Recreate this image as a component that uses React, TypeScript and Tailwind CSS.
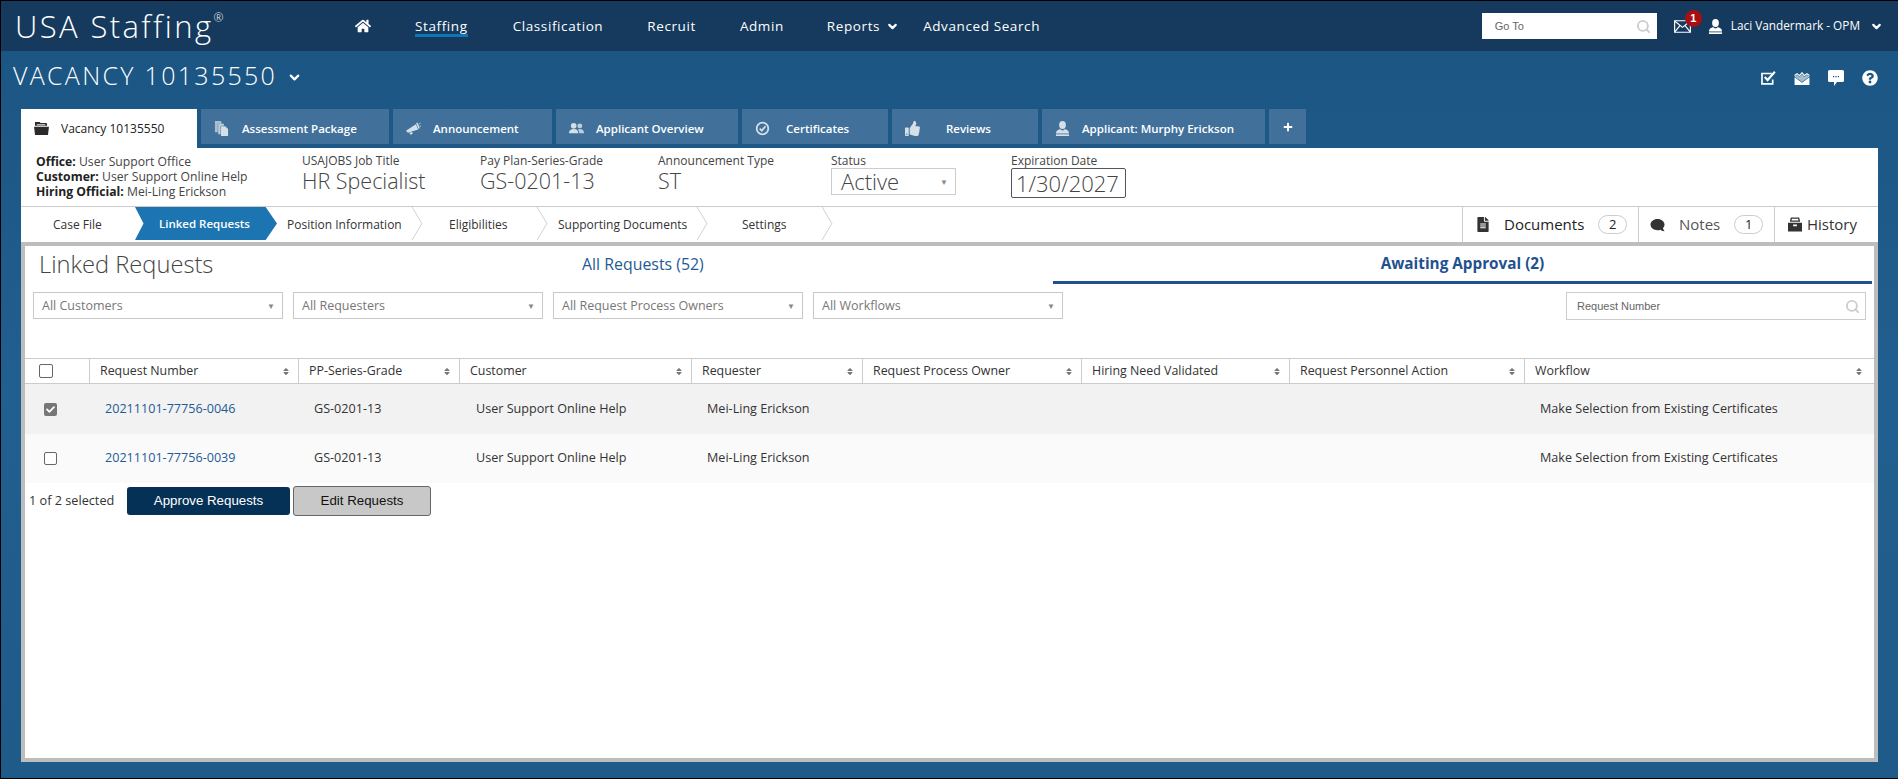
import { ChevronDown, Search } from 'lucide-react'
import { FaHome, FaThumbsUp, FaPlus, FaFileAlt, FaComment, FaQuestionCircle, FaCheck, FaSort } from 'react-icons/fa'

const FONT = "font-['Open_Sans','Noto_Sans',sans-serif]"

const NAV = [
  { label: 'Staffing', cls: 'ml-[44px] border-[#0f75b5]' },
  { label: 'Classification', cls: 'ml-[45px] border-transparent' },
  { label: 'Recruit', cls: 'ml-[44px] border-transparent' },
  { label: 'Admin', cls: 'ml-[44px] border-transparent' },
]

const TABS = [
  { label: 'Assessment Package', Icon: DocsIcon, w: 'w-[188px]', gap: 'gap-[13px]' },
  { label: 'Announcement', Icon: HornIcon, w: 'w-[159px]', gap: 'gap-[12px]' },
  { label: 'Applicant Overview', Icon: PeopleIcon, w: 'w-[182px]', gap: 'gap-[12px]' },
  { label: 'Certificates', Icon: CertIcon, w: 'w-[146px]', gap: 'gap-[16px]' },
  { label: 'Reviews', Icon: FaThumbsUp, w: 'w-[146px]', gap: 'gap-[26px]' },
  { label: 'Applicant: Murphy Erickson', Icon: UserIcon, w: 'w-[223px]', gap: 'gap-[12px]' },
]

const STEPS = [
  { label: 'Position Information', w: 'w-[146px]', pl: 'pl-[10px]' },
  { label: 'Eligibilities', w: 'w-[125px]', pl: 'pl-[26px]' },
  { label: 'Supporting Documents', w: 'w-[160px]', pl: 'pl-[10px]' },
  { label: 'Settings', w: 'w-[125px]', pl: 'pl-[34px]' },
]

const COLUMNS = [
  'Request Number',
  'PP-Series-Grade',
  'Customer',
  'Requester',
  'Request Process Owner',
  'Hiring Need Validated',
  'Request Personnel Action',
  'Workflow',
]

const GRID = 'grid grid-cols-[64px_209px_161px_232px_171px_219px_208px_235px_350px]'

const ROWS = [
  { id: '20211101-77756-0046', checked: true, bg: 'bg-[#f2f2f2]', h: 'h-[50px]' },
  { id: '20211101-77756-0039', checked: false, bg: 'bg-[#fafafa]', h: 'h-[49px]' },
]

type IconProps = { className?: string }

function FolderIcon({ className }: IconProps) {
  return (
    <svg viewBox="0 0 16 14" className={className} fill="currentColor">
      <path d="M1 0h5l1 1h6l1 1v2H1Z" />
      <path d="M3 2.5h9v1H3Z" fill="#fff" />
      <path d="M0 5h16l-1 9H1Z" />
    </svg>
  )
}

function DocsIcon({ className }: IconProps) {
  return (
    <svg viewBox="0 0 16 16" className={className} fill="currentColor">
      <path d="M1 0h6l1 1v2H4v9H1Z" opacity="0.7" />
      <path d="M4.5 3h6v2H7v9H4.5Z" opacity="0.85" />
      <path d="M7.5 5.5H12l3 3V16H7.5Z" />
    </svg>
  )
}

function HornIcon({ className }: IconProps) {
  return (
    <svg viewBox="0 0 16 14" className={className} fill="currentColor">
      <path d="M0 9.5 10.5 2.5 13 8 2 11.5Z" />
      <path d="M3.5 11.5 6.5 10.7 7.3 12.6 4.6 13.6Z" />
      <path d="M11.5 1 14 7" stroke="currentColor" strokeWidth="1.6" />
      <path d="M13.5 2.5 15.5 1.2M14.5 4.5H16" stroke="currentColor" strokeWidth="0.9" />
    </svg>
  )
}

function PeopleIcon({ className }: IconProps) {
  return (
    <svg viewBox="0 0 16 14" className={className} fill="currentColor">
      <circle cx="5" cy="4" r="3" />
      <path d="M0 12c0-3 2-4.500 5-4.500S10 9 10 12Z" />
      <circle cx="11.5" cy="4.2" r="2.6" opacity="0.85" />
      <path d="M11 12c0-2-.6-3.200-1.600-4 .6-.3 1.300-.5 2.100-.5 2.700 0 4.500 1.500 4.500 4.500Z" opacity="0.85" />
    </svg>
  )
}

function CertIcon({ className }: IconProps) {
  return (
    <svg viewBox="0 0 16 16" className={className} fill="none" stroke="currentColor">
      <circle cx="8" cy="8" r="6.2" strokeWidth="1.9" />
      <path d="M5 8.100 7.300 10.300 11.200 5.600" strokeWidth="1.9" />
    </svg>
  )
}

function UserIcon({ className }: IconProps) {
  return (
    <svg viewBox="0 0 16 16" className={className} fill="currentColor">
      <ellipse cx="8" cy="4.300" rx="3.600" ry="4.300" />
      <path d="M5.500 8.500C3 9.500 1 10.500 1 13.200h14c0-2.700-2-3.700-4.500-4.700-.7 1-1.500 1.500-2.500 1.500s-1.800-.5-2.500-1.500Z" />
      <path d="M1 14.200h14V16H1Z" />
    </svg>
  )
}

function MailIcon({ className }: IconProps) {
  return (
    <svg viewBox="0 0 16 12" className={className} fill="none" stroke="currentColor" strokeWidth="1.1">
      <path d="M.6.6h14.800v10.800H.6Z" />
      <path d="M.6.8 8 6.800 15.400.8M.6 11.200 5.600 5.200M15.400 11.200 10.400 5.200" />
    </svg>
  )
}

function CheckSquareIcon({ className }: IconProps) {
  return (
    <svg viewBox="0 0 16 15" className={className} fill="none" stroke="currentColor">
      <path d="M11.500 2.700H1v11h11.500V9" strokeWidth="1.800" />
      <path d="M4 6.500 7 9.700 14.800.8" strokeWidth="2.300" />
    </svg>
  )
}

function MailWaveIcon({ className }: IconProps) {
  return (
    <svg viewBox="0 0 17 14" className={className} fill="currentColor">
      <path d="M.5 14V5.700L8.500 11.700 16.500 5.700V14Z" />
      <path d="M.5 3.700 3.200 1.800 5.800 4 8.500 .8 11.200 4 13.800 1.800 16.500 3.700" fill="none" stroke="currentColor" strokeWidth="1.200" />
      <path d="M.5 4.600 3.200 3.200 5.800 5.400 8.500 2.500 11.200 5.400 13.800 3.200 16.500 4.600V5.200L8.500 10.800.5 5.200Z" opacity="0.6" />
    </svg>
  )
}

function BubbleIcon({ className }: IconProps) {
  return (
    <svg viewBox="0 0 16 16" className={className}>
      <path d="M1.500 0h13A1.500 1.500 0 0 1 16 1.500v9a1.500 1.500 0 0 1-1.500 1.500H9l-3 4v-4H1.500A1.500 1.500 0 0 1 0 10.500v-9A1.500 1.500 0 0 1 1.500 0Z" fill="currentColor" />
      <path d="M5 6h1.200v1.200H5ZM7.400 6h1.200v1.200H7.400ZM9.800 6H11v1.200H9.800Z" fill="#1c5584" />
    </svg>
  )
}

function ArchiveIcon({ className }: IconProps) {
  return (
    <svg viewBox="0 0 15 15" className={className} fill="currentColor">
      <path d="M3 0h9l1 4.500H2ZM4.200 1.400l-.4 1.800h7.400l-.4-1.800Z" fillRule="evenodd" />
      <path d="M0 5.500h15V15H0ZM5.500 7.500v2h4v-2Z" fillRule="evenodd" />
    </svg>
  )
}

function Chevron({ className }: IconProps) {
  return (
    <svg viewBox="0 0 12 34" className={className} fill="none" stroke="#cfcfcf" strokeWidth="1">
      <path d="M1 0 11 17 1 34" />
    </svg>
  )
}

function Select({ label, w }: { label: string; w: string }) {
  return (
    <div className={`${w} h-[27px] border border-[#c9c9c9] flex items-center justify-between pl-[8px] pr-[7px] text-[12.5px] text-[#777]`}>
      <span className="pt-[2px]">{label}</span>
      <span className="text-[8px] text-[#888]">▼</span>
    </div>
  )
}

function Pill({ n }: { n: number }) {
  return (
    <span className="w-[29px] h-[19px] rounded-full border border-[#ccc] flex items-center justify-center text-[13px] text-[#222]">
      {n}
    </span>
  )
}

export default function App() {
  return (
    <div className={`${FONT} w-[1898px] h-[779px] border-t border-l border-b border-black flex flex-col bg-linear-to-b from-[#1b5481] via-[#215f90] to-[#1f5b89] overflow-hidden text-[#333]`}>
      {/* Top nav */}
      <header className="h-[50px] shrink-0 bg-[#153a5d] flex items-center text-white">
        <div className="ml-[14px] w-[340px] text-[31px] font-light tracking-[2.4px] leading-none flex items-start">
          USA Staffing<span className="text-[12px] mt-[1px] tracking-normal">®</span>
        </div>
        <FaHome className="w-[16px] h-[16px]" />
        <nav className="flex items-center text-[13.5px] tracking-[0.6px] leading-[16px]">
          {NAV.map((n) => (
            <span key={n.label} className={`${n.cls} mt-[3px] border-b-[3px]`}>{n.label}</span>
          ))}
          <span className="ml-[43px]">Reports</span>
          <ChevronDown className="w-[13px] h-[13px] ml-[6px]" strokeWidth={4} />
          <span className="ml-[24px]">Advanced Search</span>
        </nav>
        <div className="ml-auto flex items-center">
          <div className="w-[175px] h-[26px] bg-white flex items-center justify-between pl-[13px] pr-[6px] text-[11px] text-[#666] font-['Liberation_Sans',sans-serif]">
            <span>Go To</span>
            <Search className="w-[15px] h-[15px] text-[#ccc]" strokeWidth={3} />
          </div>
          <div className="relative ml-[17px] w-[34px]">
            <MailIcon className="w-[17px] h-[13px]" />
            <span className="absolute -top-[10px] left-[11px] w-[17px] h-[17px] rounded-full bg-[#a80e12] flex items-center justify-center text-[11px] font-bold font-['Liberation_Sans',sans-serif]">1</span>
          </div>
          <UserIcon className="w-[15px] h-[15px]" />
          <span className="ml-[8px] text-[11.8px]">Laci Vandermark - OPM</span>
          <ChevronDown className="w-[13px] h-[13px] ml-[10px] mr-[15px]" strokeWidth={4} />
        </div>
      </header>

      {/* Vacancy heading */}
      <div className="h-[58px] shrink-0 flex items-start justify-between text-white">
        <div className="ml-[12px] mt-[9px] flex items-center text-[25px] font-light tracking-[2.3px] leading-[30px]">
          VACANCY 10135550
          <ChevronDown className="w-[15px] h-[15px] ml-[10px] mt-[4px]" strokeWidth={3.5} />
        </div>
        <div className="flex items-center gap-[18px] mt-[19px] mr-[20px]">
          <CheckSquareIcon className="w-[15px] h-[14px]" />
          <MailWaveIcon className="w-[16px] h-[13px]" />
          <BubbleIcon className="w-[16px] h-[16px]" />
          <FaQuestionCircle className="w-[16px] h-[16px]" />
        </div>
      </div>

      {/* Tabs */}
      <div className="h-[39px] shrink-0 flex ml-[20px] gap-[4px]">
        <div className="w-[176px] h-[39px] bg-white flex items-center pl-[13px] gap-[12px] text-[12px] text-[#222]">
          <FolderIcon className="w-[15px] h-[13px] text-[#2b2b2b]" />
          Vacancy 10135550
        </div>
        {TABS.map(({ label, Icon, w, gap }) => (
          <div key={label} className={`${w} h-[35px] bg-[#41719b] flex items-center pl-[13px] pt-[4px] ${gap} text-[11.5px] font-semibold text-white`}>
            <Icon className="w-[15px] h-[15px] text-[#d5dfe8]" />
            {label}
          </div>
        ))}
        <div className="w-[37px] h-[35px] bg-[#41719b] flex items-center justify-center text-white">
          <FaPlus className="w-[10px] h-[10px]" />
        </div>
      </div>

      {/* White content */}
      <main className="ml-[20px] w-[1857px] h-[614px] shrink-0 bg-white flex flex-col">
        <section className="h-[59px] shrink-0 flex border-b border-[#ccc] text-[#444]">
          <div className="ml-[15px] w-[266px] mt-[6px] text-[12.2px] leading-[15px]">
            <div><b className="text-[#222]">Office:</b> User Support Office</div>
            <div><b className="text-[#222]">Customer:</b> User Support Online Help</div>
            <div><b className="text-[#222]">Hiring Official:</b> Mei-Ling Erickson</div>
          </div>
          <div className="w-[178px] mt-[5px] text-[12px] leading-[16px]">
            USAJOBS Job Title
            <div className="text-[21.5px] leading-[24px] font-light">HR Specialist</div>
          </div>
          <div className="w-[178px] mt-[5px] text-[12px] leading-[16px]">
            Pay Plan-Series-Grade
            <div className="text-[21.5px] leading-[24px] font-light">GS-0201-13</div>
          </div>
          <div className="w-[173px] mt-[5px] text-[12px] leading-[16px]">
            Announcement Type
            <div className="text-[21.5px] leading-[24px] font-light">ST</div>
          </div>
          <div className="w-[180px] mt-[5px] text-[12px] leading-[15px]">
            Status
            <div className="w-[125px] h-[27px] border border-[#ccc] flex items-center justify-between pl-[9px] pr-[7px] text-[22px] font-light">
              Active
              <span className="text-[8px] text-[#888]">▼</span>
            </div>
          </div>
          <div className="mt-[5px] text-[12px] leading-[15px]">
            Expiration Date
            <div className="w-[115px] h-[30px] border border-[#555] rounded-[2px] flex items-center pl-[4px] text-[22px] font-light">
              1/30/2027
            </div>
          </div>
        </section>

        <section className="h-[35px] shrink-0 flex text-[12px]">
          <div className="w-[114px] pl-[32px] flex items-center">Case File</div>
          <div className="w-[142px] h-[33px] flex items-center pl-[24px] bg-[#1c75b0] text-white text-[11.5px] font-semibold [clip-path:polygon(0_0,92%_0,100%_50%,92%_100%,0_100%,6%_50%)]">
            Linked Requests
          </div>
          {STEPS.map((s) => (
            <div key={s.label} className={`relative ${s.w} ${s.pl} flex items-center`}>
              {s.label}
              <Chevron className="absolute right-0 top-0 w-[12px] h-[33px]" />
            </div>
          ))}
          <div className="ml-auto flex text-[15px]">
            <div className="w-[176px] border-l border-[#ccc] flex items-center pl-[14px]">
              <FaFileAlt className="w-[12px] h-[15px] text-[#333]" />
              <span className="ml-[15px] mr-[14px] text-[#222]">Documents</span>
              <Pill n={2} />
            </div>
            <div className="w-[136px] border-l border-[#ccc] flex items-center pl-[11px]">
              <FaComment className="w-[15px] h-[14px] text-[#333] -scale-x-100" />
              <span className="ml-[14px] mr-[14px] text-[#555]">Notes</span>
              <Pill n={1} />
            </div>
            <div className="w-[104px] border-l border-[#ccc] flex items-center pl-[13px]">
              <ArchiveIcon className="w-[14px] h-[15px] text-[#333]" />
              <span className="ml-[5px] text-[#333]">History</span>
            </div>
          </div>
        </section>

        {/* Bordered panel */}
        <section className="w-full h-[520px] border-[4px] border-[#bdbdbd] flex flex-col">
          <div className="h-[38px] shrink-0 flex items-start">
            <h1 className="ml-[14px] w-[543px] mt-[3px] text-[23.7px] font-light text-[#444] leading-[30px]">Linked Requests</h1>
            <a className="mt-[7px] w-[471px] text-[15.9px] text-[#1f5a95]">All Requests (52)</a>
            <div className="w-[819px] h-[38px] border-b-[3px] border-[#1f5190] text-center pt-[6px] text-[15.3px] font-bold text-[#1f5190]">
              Awaiting Approval (2)
            </div>
          </div>
          <div className="mt-[8px] flex items-start gap-[10px] pl-[8px]">
            <Select label="All Customers" w="w-[250px]" />
            <Select label="All Requesters" w="w-[250px]" />
            <Select label="All Request Process Owners" w="w-[250px]" />
            <Select label="All Workflows" w="w-[250px]" />
            <div className="ml-auto mr-[8px] w-[300px] h-[28px] border border-[#ccc] flex items-center justify-between pl-[10px] pr-[5px] text-[11px] text-[#666] font-['Liberation_Sans',sans-serif]">
              Request Number
              <Search className="w-[15px] h-[15px] text-[#ccc]" strokeWidth={3} />
            </div>
          </div>

          <div className={`${GRID} mt-[38px] h-[26px] border-y border-[#ccc] text-[12.4px] text-[#333]`}>
            <div className="flex items-center pl-[14px]">
              <span className="w-[14px] h-[14px] rounded-[2px] border border-[#666] bg-white" />
            </div>
            {COLUMNS.map((c) => (
              <div key={c} className="border-l border-[#ccc] flex items-center justify-between pl-[10px] pr-[8px] last:pr-[11px]">
                <span>{c}</span>
                <FaSort className="w-[8px] h-[9px] text-[#777]" />
              </div>
            ))}
          </div>

          {ROWS.map((r) => (
            <div key={r.id} className={`${GRID} ${r.h} ${r.bg} text-[12.6px] text-[#333] items-center`}>
              <div className="pl-[19px] flex">
                {r.checked ? (
                  <span className="w-[13px] h-[13px] rounded-[2px] bg-[#777] flex items-center justify-center">
                    <FaCheck className="w-[9px] h-[9px] text-white" />
                  </span>
                ) : (
                  <span className="w-[13px] h-[13px] rounded-[2px] border border-[#666] bg-white" />
                )}
              </div>
              <a className="pl-[16px] text-[#1f5a95]">{r.id}</a>
              <div className="pl-[16px]">GS-0201-13</div>
              <div className="pl-[17px]">User Support Online Help</div>
              <div className="pl-[16px]">Mei-Ling Erickson</div>
              <div />
              <div />
              <div />
              <div className="pl-[16px]">Make Selection from Existing Certificates</div>
            </div>
          ))}

          <div className="mt-[3px] flex items-center text-[12.7px] text-[#333]">
            <span className="ml-[4px] w-[98px]">1 of 2 selected</span>
            <button className="w-[163px] h-[28px] rounded-[3px] bg-[#063157] text-white text-[13.3px] font-['Liberation_Sans',sans-serif]">Approve Requests</button>
            <button className="ml-[3px] w-[138px] h-[30px] rounded-[3px] bg-[#c8c8c8] border border-[#666] text-[#111] text-[13.3px] font-['Liberation_Sans',sans-serif]">Edit Requests</button>
          </div>
        </section>
      </main>
    </div>
  )
}
